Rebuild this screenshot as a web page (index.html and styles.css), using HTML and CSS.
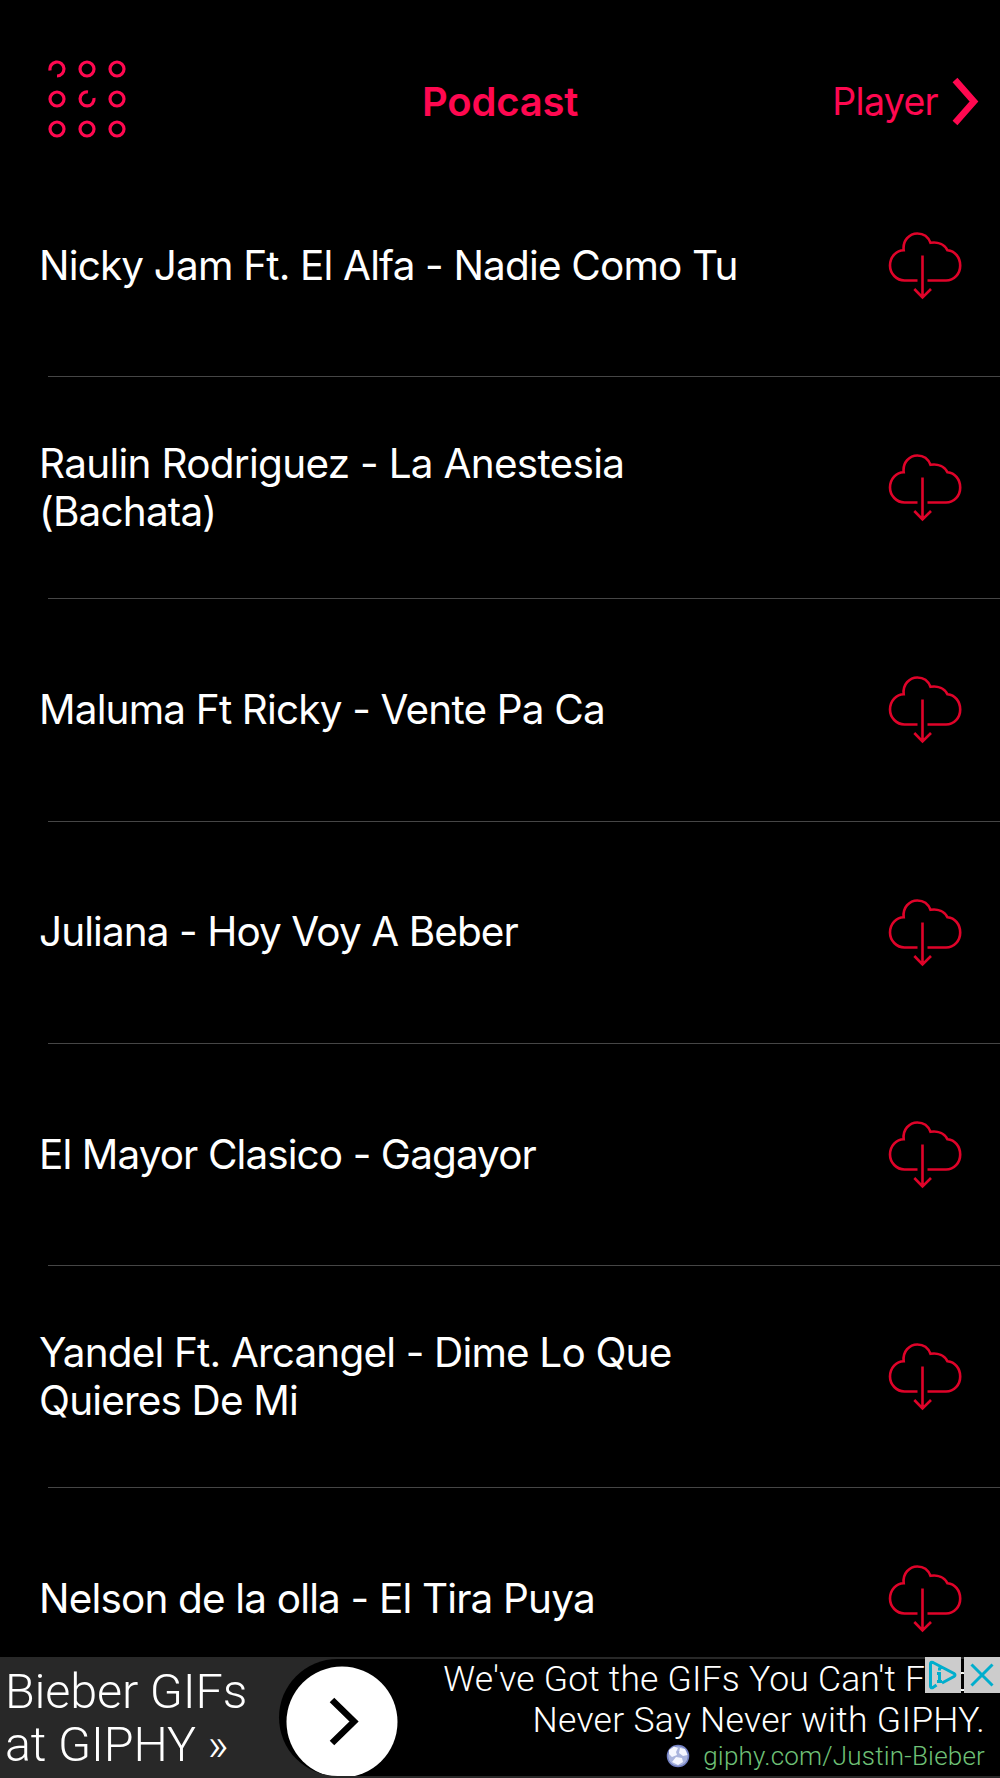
FILE: index.html
```html
<!DOCTYPE html>
<html lang="es">
<head>
<meta charset="utf-8">
<title>Podcast</title>
<link rel="stylesheet" href="styles.css">
</head>
<body>
<svg class="defs" width="0" height="0">
  <symbol id="cloud" viewBox="0 0 74 70">
    <path d="M29.500 50.500H16.500C8.500 50.500 2 43.500 2 35.500C2 27 8.500 20.200 15.700 20.200C14.500 10.500 21.500 3.500 29.300 3.500C36 3.500 40.300 7 42.500 12.800C50 11.500 56.500 14.500 59.500 20.300C67 21 72.200 27.500 72.200 35.500C72.200 44 66 50.500 58 50.500H39.500M34.500 25.500V67.500M26.300 59L34.500 67.500L43 59"/>
  </symbol>
</svg>
<div class="app">
  <header class="nav">
    <svg class="menu" width="78" height="78" viewBox="0 0 78 78">
      <path d="M2.100 10.500A7 7 0 1 1 9 16"/>
      <circle cx="39" cy="9" r="7"/><circle cx="69" cy="9" r="7"/>
      <circle cx="9" cy="39" r="7"/><path d="M40 32A7 7 0 1 0 46 38"/><circle cx="69" cy="39" r="7"/>
      <circle cx="9" cy="69" r="7"/><circle cx="39" cy="69" r="7"/><circle cx="69" cy="69" r="7"/>
    </svg>
    <h1 class="title">Podcast</h1>
    <div class="player"><span>Player</span>
      <svg width="30" height="50" viewBox="0 0 30 50"><path d="M4 3L23 24.500L4 46"/></svg>
    </div>
  </header>
  <ul class="list">
    <li class="row"><p>Nicky Jam Ft. El Alfa - Nadie Como Tu</p><svg class="cloud"><use href="#cloud"/></svg></li>
    <li class="row"><p><span class="loose">Raulin Rodriguez - La Anestesia</span><br>(Bachata)</p><svg class="cloud"><use href="#cloud"/></svg></li>
    <li class="row"><p>Maluma Ft Ricky - Vente Pa Ca</p><svg class="cloud"><use href="#cloud"/></svg></li>
    <li class="row"><p class="tight">Juliana - Hoy Voy A Beber</p><svg class="cloud"><use href="#cloud"/></svg></li>
    <li class="row"><p class="tight">El Mayor Clasico - Gagayor</p><svg class="cloud"><use href="#cloud"/></svg></li>
    <li class="row"><p>Yandel Ft. Arcangel - Dime Lo Que<br>Quieres De Mi</p><svg class="cloud"><use href="#cloud"/></svg></li>
    <li class="row"><p>Nelson de la olla - El Tira Puya</p><svg class="cloud"><use href="#cloud"/></svg></li>
  </ul>
  <aside class="ad">
    <div class="ad-title">Bieber GIFs<br>at GIPHY <span class="raquo">»</span></div>
    <div class="ad-panel">
      <svg class="go" width="112" height="112" viewBox="0 0 112 112"><circle cx="56" cy="56" r="55.500"/><path d="M46 34L68 55.500L46 77"/></svg>
      <div class="ad-copy">
        <p class="l1">We've Got the GIFs You Can't Find</p>
        <p class="l2">Never Say Never with GIPHY.</p>
        <p class="url"><svg width="24" height="24" viewBox="0 0 24 24"><circle class="sea" cx="12" cy="12" r="10.500"/><path d="M3 6L8 2.500L12 4L10 8L11 11L6 13L3 10ZM14 4L19 5L21.500 11L17 12L13 9ZM10 13L16 14L17 18L12 21L6 18Z"/></svg><span>giphy.com/Justin-Bieber</span></p>
      </div>
    </div>
    <div class="badges">
      <svg width="36" height="36" viewBox="0 0 36 36"><path d="M12 24.500H17M14.500 24.500V16.500H12M14.500 13.500V10.500M11.500 28L8 30.500Q5.500 31.500 5.500 29V7Q5.500 4.500 8 5.500L29 16.500Q31 18 29 19.500L17 26"/></svg>
      <svg width="36" height="36" viewBox="0 0 36 36"><path d="M7.500 7.500L28.500 28.500M28.500 7.500L7.500 28.500"/></svg>
    </div>
  </aside>
</div>
</body>
</html>
```
FILE: styles.css
```css
* { box-sizing: border-box; margin: 0; padding: 0; }
body { background: #000; }
.defs { display: block; }
.app {
  width: 1000px;
  height: 1778px;
  overflow: hidden;
  display: flex;
  flex-direction: column;
  background: #000;
  color: #fff;
  font-family: Inter, "Liberation Sans", sans-serif;
}
svg { display: block; flex: none; fill: none; }
.nav {
  height: 154px;
  flex: none;
  display: grid;
  grid-template-columns: 374px auto 1fr;
  align-items: center;
  padding: 50px 19px 6px 48px;
  color: #ff0850;
}
.menu { stroke: #ff0850; stroke-width: 3.2; }
.title { font-size: 40px; font-weight: 600; line-height: 50px; letter-spacing: -0.2px; padding-top: 5px; }
.player {
  display: flex;
  align-items: center;
  justify-content: flex-end;
  gap: 13px;
  padding-top: 5px;
  font-size: 37.500px;
  line-height: 50px;
  letter-spacing: -0.7px;
}
.player svg { stroke: #ff0850; stroke-width: 6.500; }
.list { list-style: none; flex: 1; min-height: 0; overflow: hidden; }
.row {
  height: 222.200px;
  display: flex;
  align-items: center;
  justify-content: space-between;
  padding: 0 38px 0 39px;
}
.row + .row { background: linear-gradient(#464646, #464646) 48px 0 / 100% 1px no-repeat; }
.row p { font-size: 40.500px; line-height: 48.500px; letter-spacing: -0.84px; white-space: nowrap; padding-top: 2px; }
.row .tight { letter-spacing: -0.92px; }
.row .loose { letter-spacing: -0.72px; }
.cloud { width: 74px; height: 70px; stroke: #df0329; stroke-width: 2.600; }
.ad {
  position: relative;
  height: 121px;
  flex: none;
  display: flex;
  background: #282828;
  font-family: Roboto, sans-serif;
  font-weight: 300;
  padding: 2px 0;
}
.ad-title { width: 279px; padding: 6px 0 0 5px; font-size: 48.500px; line-height: 53px; letter-spacing: -0.15px; white-space: nowrap; }
.raquo { font-size: 46px; line-height: 1; }
.ad-panel {
  flex: 1;
  display: flex;
  overflow: hidden;
  justify-content: space-between;
  background: #000;
  border-radius: 63px 0 0 63px;
  padding: 7px 15px 0 7px;
}
.go circle { fill: #fff; }
.go path { stroke: #000; stroke-width: 6.500; }
.ad-copy { display: flex; flex-direction: column; align-items: flex-end; white-space: nowrap; font-size: 35.500px; line-height: 40.500px; margin-top: -7px; }
.l1 { letter-spacing: 0.2px; margin-right: 12px; }
.l2 { letter-spacing: 0.3px; }
.url { display: flex; align-items: center; gap: 13px; font-size: 26px; line-height: 32px; letter-spacing: 0.2px; color: #6fc177; }
.url path { fill: #f4f6ff; }
.sea { fill: #a9b4dd; stroke: #7482c4; stroke-width: 1.500; }
.badges { position: absolute; top: 0; right: 0; display: flex; gap: 3px; }
.badges svg { background: #ccc; stroke: #00aecd; stroke-width: 3; }
```
